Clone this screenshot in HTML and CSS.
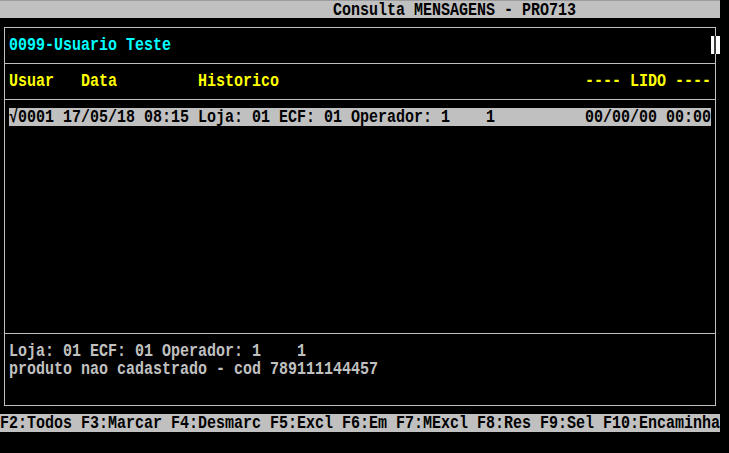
FILE: index.html
```html
<!DOCTYPE html>
<html lang="pt">
<head>
  <meta charset="UTF-8">
  <title>Consulta MENSAGENS - PRO713</title>
  <link rel="stylesheet" href="styles.css">
</head>
<body>

  <div class="screen">

    <div class="titlebar"><span class="t">Consulta MENSAGENS - PRO713</span></div>

    <div class="frame">
      <div class="sect user">
        <div class="row cyan"><span class="t">0099-Usuario Teste</span></div>
      </div>

      <div class="sect head">
        <div class="row yellow"><span class="t">Usuar   Data         Historico                                  ---- LIDO ----</span></div>
      </div>

      <div class="sect list">
        <div class="row sel"><span class="t">√0001 17/05/18 08:15 Loja: 01 ECF: 01 Operador: 1    1          00/00/00 00:00</span></div>
      </div>

      <div class="sect detail">
        <div class="row"><span class="t">Loja: 01 ECF: 01 Operador: 1    1</span></div>
        <div class="row"><span class="t">produto nao cadastrado - cod 789111144457</span></div>
      </div>

      <!-- scroll thumb sits on the right border -->
      <div class="thumb"></div>
    </div>

    <div class="keys"><span class="t">F2:Todos F3:Marcar F4:Desmarc F5:Excl F6:Em F7:MExcl F8:Res F9:Sel F10:Encaminha</span></div>

  </div>

</body>
</html>
```

FILE: styles.css
```css
body {
  margin: 0;
  background: #000;
}
.screen {
  width: 720px;
  height: 453px;
  background: #000;
  color: #c0c0c0;
  font-family: "Liberation Mono", "DejaVu Sans Mono", monospace;
  font-size: 15px;
  font-weight: bold;
  line-height: 18px;
}
.t {
  display: inline-block;
  white-space: pre;
  vertical-align: top;
  transform: translateY(1px) scaleY(1.25);
}
.titlebar {
  height: 17px;
  line-height: 17px;
  border-top: 1px solid #9c9c9c;
  background: #c0c0c0;
  color: #000;
  padding-left: 333px;
}
.frame {
  position: relative;
  box-sizing: border-box;
  width: 712px;
  margin: 9px 0 0 4px;
  border: 1px solid #c0c0c0;
}
.sect {
  box-sizing: border-box;
  padding: 8px 0 0 4px;
}
.user, .head {
  height: 36px;
  border-bottom: 1px solid #c0c0c0;
}
.list {
  height: 234px;
  border-bottom: 1px solid #c0c0c0;
}
.detail {
  height: 71px;
}
.row {
  height: 18px;
}
.cyan {
  color: #00ffff;
}
.yellow {
  color: #ffff00;
}
.sel {
  width: 702px;
  background: #c0c0c0;
  color: #000;
}
.thumb {
  position: absolute;
  left: 706px;
  top: 8px;
  width: 9px;
  height: 18px;
  background: #fff;
}
.thumb::after {
  content: "";
  position: absolute;
  left: 3px;
  top: 0;
  width: 2px;
  height: 18px;
  background: #404040;
}
.keys {
  height: 18px;
  margin-top: 8px;
  background: #c0c0c0;
  color: #000;
}
```
